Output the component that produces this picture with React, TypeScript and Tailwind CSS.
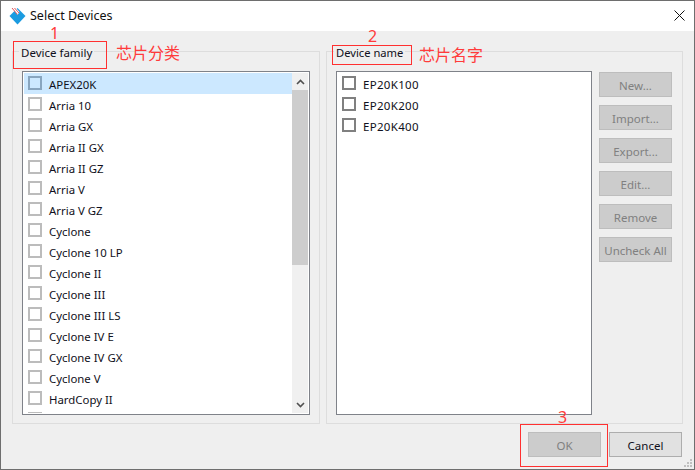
const families = ["APEX20K","Arria 10","Arria GX","Arria II GX","Arria II GZ","Arria V","Arria V GZ","Cyclone","Cyclone 10 LP","Cyclone II","Cyclone III","Cyclone III LS","Cyclone IV E","Cyclone IV GX","Cyclone V","HardCopy II","HardCopy III"];
const names = ["EP20K100","EP20K200","EP20K400"];
const actions = ["New...","Import...","Export...","Edit...","Remove","Uncheck All"];

function Logo() {
  return (
    <svg width="17" height="18" viewBox="0 0 17 18" className="shrink-0">
      <polygon points="8.5,1 16.5,9 8.5,17.5 0.5,9" fill="#1b9be0" />
      <polygon points="3,0.5 6.5,0.5 10.5,5 8.5,8" fill="#ffffff" />
      <path d="M3 1 L8.5 7.5 M5.5 1 L10 6" stroke="#e0555a" strokeWidth="1" fill="none" />
    </svg>
  );
}

function Row({ label, selected, dark }: { label: string; selected?: boolean; dark?: boolean }) {
  return (
    <div className={`flex h-[21px] shrink-0 items-center text-[#101020] ${dark ? "pl-[5px] text-[11.5px] tracking-[0.3px]" : "pl-[4px] text-[11.4px]"} ${selected ? "bg-[#cce8ff]" : ""}`}>
      <span className={`mb-px h-[14px] w-[14px] shrink-0 border-2 ${selected ? "border-[#88a5bf]" : dark ? "border-[#808080] bg-white" : "border-[#bcbcbc]"}`} />
      <span className="ml-[7px] pt-[2px]">{label}</span>
    </div>
  );
}

function Legend({ label, className }: { label: string; className: string }) {
  return <span className={`absolute top-[-7px] bg-[#efefef] leading-[16px] text-[#101020] ${className}`}>{label}</span>;
}

function Note({ className, children }: { className: string; children: string }) {
  return <span className={`absolute text-[#ff3b3b] ${className}`}>{children}</span>;
}

function Box({ className }: { className: string }) {
  return <div className={`absolute border border-[#ff3030] ${className}`} />;
}

export default function App() {
  return (
    <div className="relative flex h-[470px] w-[695px] flex-col overflow-hidden border border-[#6e6e6e] bg-[#efefef] font-['Noto_Sans','Noto_Sans_CJK_SC',sans-serif]">
      <div className="flex h-[30px] shrink-0 items-center bg-white pl-[8px] pr-[9px]">
        <Logo />
        <span className="ml-[4px] flex-1 text-[12.5px] text-[#111]">Select Devices</span>
        <svg width="11" height="11" viewBox="0 0 11 11" className="mb-px"><path d="M0.5 0.5 L10.5 10.5 M10.5 0.5 L0.5 10.5" stroke="#111" strokeWidth="1" fill="none" /></svg>
      </div>

      <div className="flex h-[393px] shrink-0 gap-[6px] pl-[11px] pr-[11px] pt-[20px]">
        <div className="relative w-[308px] border border-[#dddddd] px-[9px] pb-[8px] pt-[19px]">
          <Legend label="Device family" className="left-[6px] px-[2px] text-[11.5px]" />
          <div className="flex h-[344px] border border-[#7f8289] bg-white p-px">
            <div className="flex flex-1 flex-col overflow-hidden">
              {families.map((f, i) => <Row key={f} label={f} selected={i === 0} />)}
            </div>
            <div className="flex w-[16px] shrink-0 flex-col bg-[#f0f0f0]">
              <div className="flex h-[17px] items-center justify-center">
                <svg width="9" height="6" viewBox="0 0 9 6"><path d="M1 5 L4.5 1.5 L8 5" stroke="#505050" strokeWidth="1.6" fill="none" /></svg>
              </div>
              <div className="h-[175px] bg-[#cdcdcd]" />
              <div className="flex-1" />
              <div className="flex h-[17px] items-center justify-center">
                <svg width="9" height="6" viewBox="0 0 9 6"><path d="M1 1 L4.5 4.5 L8 1" stroke="#505050" strokeWidth="1.6" fill="none" /></svg>
              </div>
            </div>
          </div>
        </div>

        <div className="relative flex w-[357px] gap-[7px] border border-[#dddddd] pb-[8px] pl-[9px] pr-[10px] pt-[19px]">
          <Legend label="Device name" className="left-[7px] px-[2px] text-[11.2px]" />
          <div className="flex h-[344px] w-[256px] flex-col border border-[#7f8289] bg-white pt-[1px]">
            {names.map(n => <Row key={n} label={n} dark />)}
          </div>
          <div className="flex w-[73px] flex-col gap-[8px] pt-px">
            {actions.map(a => (
              <div key={a} className="flex h-[25px] items-center justify-center whitespace-nowrap border border-[#bdbdbd] bg-[#cccccc] pt-[3px] text-[11.5px] text-[#808080]">{a}</div>
            ))}
          </div>
        </div>
      </div>

      <div className="flex flex-1 justify-end gap-[8px] pr-[12px] pt-[8px]">
        <div className="flex h-[25px] w-[73px] items-center justify-center border border-[#bdbdbd] bg-[#cccccc] pt-[3px] text-[11.5px] text-[#808080]">OK</div>
        <div className="flex h-[25px] w-[73px] items-center justify-center border border-[#adadad] bg-[#e1e1e1] pt-[3px] text-[11.5px] text-[#101020]">Cancel</div>
      </div>

      <svg width="11" height="11" viewBox="0 0 11 11" className="absolute bottom-0 right-0" fill="#c0c0c0">
        <rect x="7" y="1" width="2" height="2" /><rect x="4" y="4" width="2" height="2" /><rect x="7" y="4" width="2" height="2" /><rect x="1" y="7" width="2" height="2" /><rect x="4" y="7" width="2" height="2" /><rect x="7" y="7" width="2" height="2" />
      </svg>

      <Box className="left-[12px] top-[40px] h-[28px] w-[94px]" />
      <Box className="left-[331px] top-[44px] h-[20px] w-[80px]" />
      <Box className="left-[519px] top-[423px] h-[43px] w-[88px]" />
      <Note className="left-[49px] top-[22px] text-[16px] leading-[20px]">1</Note>
      <Note className="left-[367px] top-[25px] text-[16px] leading-[20px]">2</Note>
      <Note className="left-[557px] top-[406px] text-[16px] leading-[20px]">3</Note>
      <Note className="left-[115px] top-[41px] text-[16px] leading-[22px]">芯片分类</Note>
      <Note className="left-[418px] top-[43px] text-[16px] leading-[22px]">芯片名字</Note>
    </div>
  );
}
